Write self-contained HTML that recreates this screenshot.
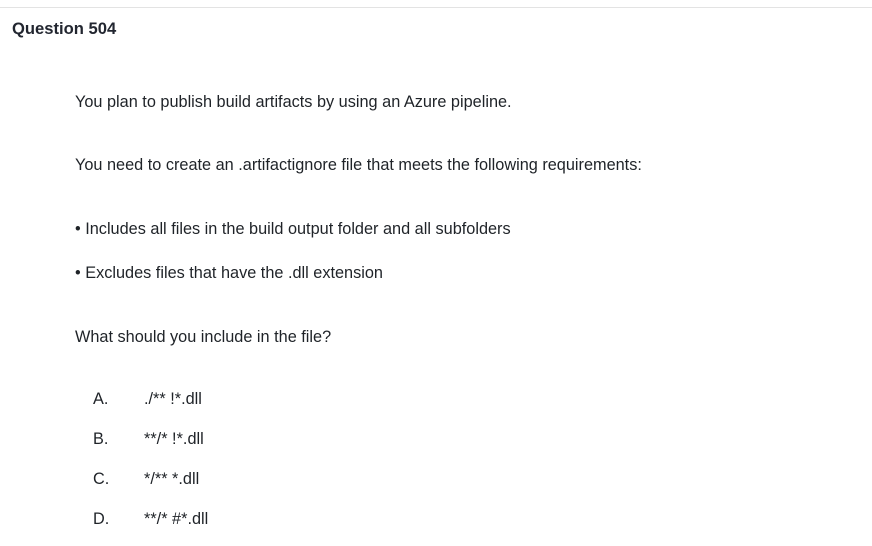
<!DOCTYPE html>
<html><head><meta charset="utf-8"><style>
body{margin:0;width:872px;height:546px;background:#fff;font-family:"Liberation Sans",sans-serif;color:#1f2328;position:relative;overflow:hidden}
.t{position:absolute;font-size:16.3px;white-space:nowrap;line-height:18px}
.line{position:absolute;left:0;right:0;top:7px;height:1px;background:#e3e3e3}
</style></head><body>
<div class="line"></div>
<div class="t" style="left:12px;top:20px;font-weight:bold;font-size:16.6px;color:#222630">Question 504</div>
<div class="t" style="left:75px;top:93px">You plan to publish build artifacts by using an Azure pipeline.</div>
<div class="t" style="left:75px;top:156px">You need to create an .artifactignore file that meets the following requirements:</div>
<div class="t" style="left:75px;top:220px">• Includes all files in the build output folder and all subfolders</div>
<div class="t" style="left:75px;top:264px">• Excludes files that have the .dll extension</div>
<div class="t" style="left:75px;top:328px">What should you include in the file?</div>
<div class="t" style="left:93px;top:390px">A.</div><div class="t" style="left:144px;top:390px">./** !*.dll</div>
<div class="t" style="left:93px;top:430px">B.</div><div class="t" style="left:144px;top:430px">**/* !*.dll</div>
<div class="t" style="left:93px;top:470px">C.</div><div class="t" style="left:144px;top:470px">*/** *.dll</div>
<div class="t" style="left:93px;top:510px">D.</div><div class="t" style="left:144px;top:510px">**/* #*.dll</div>
</body></html>
